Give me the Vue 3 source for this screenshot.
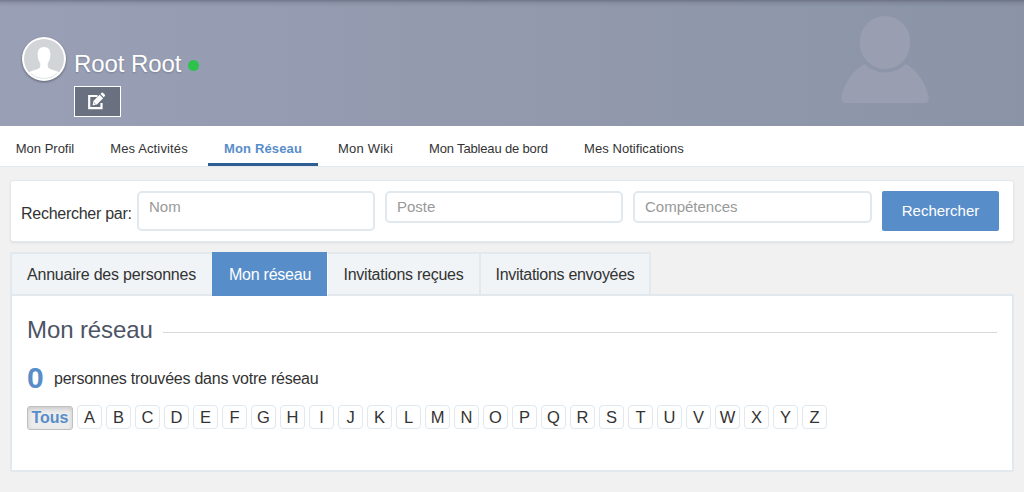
<script setup>
const nav = [
  { label: 'Mon Profil', width: 90, spacing: 0 },
  { label: 'Mes Activités', width: 110, spacing: 0.13 },
  { label: 'Mon Réseau', width: 110, spacing: 0.15, active: true },
  { label: 'Mon Wiki', width: 87, spacing: 0.2 },
  { label: 'Mon Tableau de bord', width: 151, spacing: -0.16 },
  { label: 'Mes Notifications', width: 132, spacing: 0.05 },
]
const tabs = [
  { label: 'Annuaire des personnes', width: 202, spacing: -0.2 },
  { label: 'Mon réseau', width: 115, spacing: -0.23, active: true },
  { label: 'Invitations reçues', width: 154, spacing: -0.25 },
  { label: 'Invitations envoyées', width: 170, spacing: -0.3 },
]
const letters = 'ABCDEFGHIJKLMNOPQRSTUVWXYZ'.split('')
const fit = (item) => ({ width: item.width + 'px', letterSpacing: item.spacing + 'px' })
</script>

<template>
  <div class="page">
    <header class="banner">
      <svg class="avatar" viewBox="0 0 46 46" width="46" height="46">
        <defs><clipPath id="face"><circle cx="23" cy="23" r="20" /></clipPath></defs>
        <circle cx="23" cy="23" r="22" fill="#fff" />
        <circle cx="23" cy="23" r="20" fill="#d1d5d8" />
        <g clip-path="url(#face)" fill="#fff">
          <path d="M23 11c4.700 0 6.600 3.200 6.300 8-.2 4-1.300 6.500-2.500 8.300v3.700c1.500 3 9 2.800 11.700 6.200V45H7.500v-7.800c2.700-3.400 10.200-3.200 11.700-6.200v-3.700c-1.200-1.800-2.300-4.300-2.500-8.300-.3-4.800 1.600-8 6.300-8z" />
        </g>
        <path d="M10 37.500a19.400 19.400 0 0 0 26 0" fill="none" stroke="#d9dcdf" stroke-width=".7" />
      </svg>
      <div class="identity">
        <div class="name-row"><span class="name">Root Root</span><i class="status"></i></div>
        <button class="edit" aria-label="Modifier">
          <svg viewBox="0 0 18 18" width="18" height="18">
            <path d="M10.500 4H2.200v12.200h12.300V11" fill="none" stroke="#fff" stroke-width="2.200" />
            <path d="M5.600 13.400l.8-4.400 6.200-6.200 3.500 3.500-6.200 6.200zM13.500 1.900l1.200-1.200q.6-.5 1.200 0l2 2q.5.600 0 1.200l-1.200 1.300z" fill="#fff" />
            <path d="M6.900 10.500l1.600 1.600" stroke="#69707f" stroke-width=".8" />
          </svg>
        </button>
      </div>
      <svg class="silhouette" viewBox="0 0 90 90" width="90" height="90">
        <ellipse cx="45" cy="27.500" rx="25.300" ry="26.500" />
        <path d="M24.500 49Q33 57.500 45 57.500T66 49C78 56 86 69 88.500 82Q89 87.900 85.500 87.900H4.500Q1 87.900 1.500 82C4 69 12 56 24.500 49z" />
      </svg>
    </header>

    <nav class="nav">
      <a v-for="n in nav" :key="n.label" :class="{ active: n.active }" :style="fit(n)">{{ n.label }}</a>
    </nav>

    <form class="search" @submit.prevent>
      <label>Rechercher par:</label>
      <input class="tall" placeholder="Nom" />
      <input placeholder="Poste" />
      <input class="last" placeholder="Compétences" />
      <button>Rechercher</button>
    </form>

    <div class="tabs">
      <a v-for="(t, i) in tabs" :key="t.label" :class="['tab', 't' + i, { active: t.active }]" :style="fit(t)">{{ t.label }}</a>
    </div>
    <main class="panel">
      <h1><span>Mon réseau</span></h1>
      <div class="count"><strong>0</strong><span>personnes trouvées dans votre réseau</span></div>
      <div class="letters">
        <a class="all">Tous</a>
        <a v-for="l in letters" :key="l">{{ l }}</a>
      </div>
    </main>
  </div>
</template>

<style>
html, body { margin: 0; background: #f1f1f1; }
</style>
<style scoped>
* { box-sizing: border-box; }
.page { width: 1024px; height: 492px; overflow: hidden; background: #f1f1f1; font-family: "Liberation Sans", Arial, sans-serif; color: #333; }
.banner { height: 126px; display: flex; background: linear-gradient(180deg, rgba(60, 65, 85, .4), rgba(60, 65, 85, .12) 3px, transparent 7px), linear-gradient(90deg, #999fb5, #8e96a9 80%, #8b93a6); padding-left: 21px; }
.avatar { margin-top: 36px; filter: drop-shadow(0 1px 1px rgba(0, 0, 0, .4)); flex: none; }
.identity { margin-left: 7px; padding-top: 49px; }
.name-row { display: flex; align-items: center; height: 30px; }
.name { font-size: 24px; letter-spacing: -.08px; color: #fff; line-height: 30px; text-shadow: 0 1px 2px rgba(0, 0, 0, .2); white-space: nowrap; }
.status { width: 11px; height: 11px; border-radius: 50%; background: #2ec24c; margin: 2px 0 0 7px; }
.edit { display: flex; justify-content: center; align-items: center; width: 47px; height: 31px; padding: 0 3px 2px 0; margin-top: 7px; border: 1px solid #fff; background: #69707f; }
.silhouette { margin: 15px 94px 0 auto; fill: #999fb1; }
.nav { height: 41px; background: #fff; border-bottom: 1px solid #e1e8ee; display: flex; gap: 4px; }
.nav a { height: 40px; line-height: 45px; text-align: center; font-size: 13px; white-space: nowrap; }
.nav a.active { color: #578dc9; font-weight: bold; border-bottom: 3px solid #2f5e92; }
.search { margin: 13px 10px 0; height: 62px; background: #fff; border: 1px solid #e1e8ee; border-radius: 3px; box-shadow: 0 1px 2px rgba(0, 0, 0, .08); display: flex; align-items: flex-start; padding: 10px 14px 0 10px; }
.search label { width: 116px; font-size: 16px; letter-spacing: -.27px; line-height: 46px; white-space: nowrap; }
.search input { width: 238px; height: 32px; border: 2px solid #e1e8ee; border-radius: 5px; margin-right: 10px; padding: 0 10px 1px; font: 15px "Liberation Sans", Arial, sans-serif; background: #fff; }
.search input.tall { height: 40px; padding-bottom: 9px; }
.search input.last { width: 239px; }
.search input::placeholder { color: #999; opacity: 1; }
.search button { width: 117px; height: 40px; padding: 0 0 2px; border: 0; border-radius: 2px; background: #578dc9; color: #fff; font: 15px "Liberation Sans", Arial, sans-serif; }
.tabs { display: flex; margin: 10px 10px 0; height: 42px; }
.tab { height: 44px; background: #f0f4f7; border: 2px solid #e1e8ee; border-left-width: 0; text-align: center; font-size: 16px; line-height: 41px; white-space: nowrap; position: relative; }
.tab.t0 { border-left-width: 2px; border-right-width: 0; padding-right: 1px; }
.tab.t2 { border-left: 1px solid #fff; }
.tab.active { background: #578dc9; border-color: #578dc9; color: #fff; padding-left: 3px; }
.panel { margin: 0 10px; height: 178px; background: #fff; border: 2px solid #e1e8ee; border-radius: 0 2px 2px 2px; padding: 18px 15px 0; }
h1 { margin: 0; font-size: 24px; letter-spacing: -.1px; line-height: 32px; height: 32px; font-weight: normal; color: #4d5466; display: flex; align-items: center; }
h1 span { white-space: nowrap; }
h1::after { content: ''; flex: 1; height: 1px; margin: 4px 0 0 10px; background: #d5d8db; }
.count { display: flex; align-items: flex-start; margin-top: 14px; height: 36px; line-height: 36px; font-size: 16px; letter-spacing: -.24px; }
.count span { line-height: 38px; }
.count strong { color: #578dc9; font-size: 30px; width: 27px; }
.letters { display: flex; gap: 4px; margin-top: 9px; }
.letters a { width: 25px; height: 24px; border: 1px solid #e1e8ee; border-radius: 4px; text-align: center; font-size: 16.500px; line-height: 23px; }
.letters .all { width: 46px; margin-top: 1px; border-color: #bfbfbf; border-radius: 3px; background: #ececec; box-shadow: inset 0 2px 4px rgba(0, 0, 0, .15); color: #578dc9; font-size: 16px; font-weight: bold; line-height: 21px; }
</style>
